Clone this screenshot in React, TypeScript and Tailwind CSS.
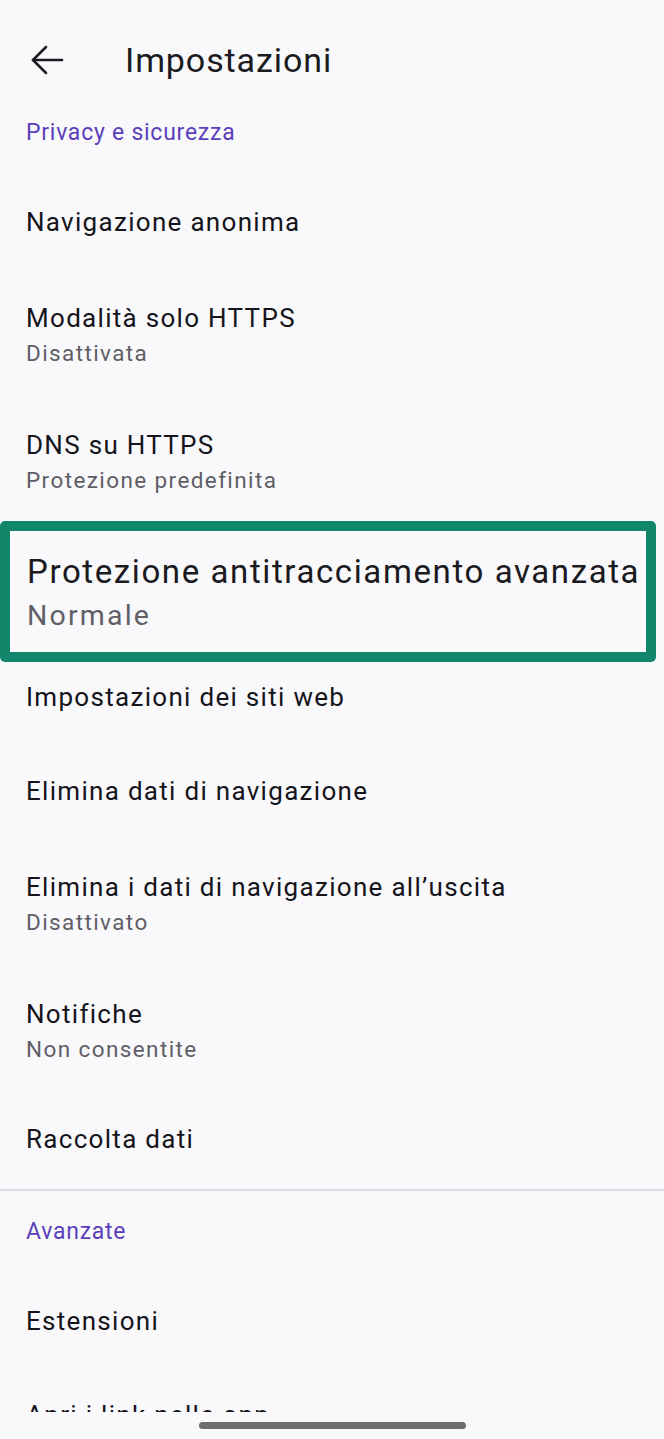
import React from 'react';

type Pref = {
  title: string;
  summary?: string;
  highlighted?: boolean;
};

const privacyPrefs: Pref[] = [
  { title: 'Navigazione anonima' },
  { title: 'Modalità solo HTTPS', summary: 'Disattivata' },
  { title: 'DNS su HTTPS', summary: 'Protezione predefinita' },
  { title: 'Protezione antitracciamento avanzata', summary: 'Normale', highlighted: true },
  { title: 'Impostazioni dei siti web' },
  { title: 'Elimina dati di navigazione' },
  { title: 'Elimina i dati di navigazione all’uscita', summary: 'Disattivato' },
  { title: 'Notifiche', summary: 'Non consentite' },
  { title: 'Raccolta dati' },
];

const advancedPrefs: Pref[] = [{ title: 'Estensioni' }, { title: 'Apri i link nelle app' }];

const BackArrow = () => (
  <svg width="34" height="30" viewBox="0 0 34 30" fill="none" stroke="#1c1b1f" strokeWidth="2.6" strokeLinecap="round" strokeLinejoin="round">
    <path d="M32 15H3" />
    <path d="M16 2L3 15l13 13" />
  </svg>
);

const CategoryHeader = ({ label }: { label: string }) => (
  <div className="pl-[26px] pt-[26px] pb-[27px] text-[23px] leading-[30px] tracking-[0.75px] text-[#5b3fba]">{label}</div>
);

const PrefRow = ({ pref }: { pref: Pref }) => {
  if (pref.highlighted) {
    // callout box drawn over the row, a bit larger than the row itself
    return (
      <div className="relative h-[127px]">
        <div className="absolute left-0 top-[-2px] w-[656px] h-[141px] rounded-[5px] border-[10px] border-[#12866a] bg-[#f9f9fc] flex flex-col justify-center pl-[17px] pt-[5px]">
          <div className="text-[33px] leading-[44px] tracking-[1.6px] text-[#1b1a20] whitespace-nowrap">{pref.title}</div>
          <div className="text-[28.5px] leading-[44px] tracking-[2.2px] text-[#605f66]">{pref.summary}</div>
        </div>
      </div>
    );
  }

  return (
    <div className={`flex flex-col justify-center pl-[26px] ${pref.summary ? 'h-[127px] pt-[4px]' : 'h-[94px]'}`}>
      <div className="text-[26px] leading-[36px] tracking-[1.3px] text-[#15141a]">{pref.title}</div>
      {pref.summary && <div className="text-[22.5px] leading-[34px] tracking-[1.4px] text-[#5f5e66]">{pref.summary}</div>}
    </div>
  );
};

export default function App() {
  return (
    <div className="w-[664px] h-[1439px] bg-[#f9f9fc] flex flex-col overflow-hidden" style={{ fontFamily: 'Roboto, "Noto Sans", sans-serif' }}>
      <div className="h-[1412px] overflow-hidden">
        {/* toolbar */}
        <div className="mt-[28px] h-[64px] flex items-center">
          <div className="pl-[30px] w-[125px] flex items-center">
            <BackArrow />
          </div>
          <div className="text-[34px] leading-[40px] tracking-[0.9px] text-[#1b1a20]">Impostazioni</div>
        </div>

        <CategoryHeader label="Privacy e sicurezza" />
        {privacyPrefs.map((p) => (
          <PrefRow key={p.title} pref={p} />
        ))}

        <div className="mt-[3px] h-[2px] bg-[#dedde3]" />

        <CategoryHeader label="Avanzate" />
        {advancedPrefs.map((p) => (
          <PrefRow key={p.title} pref={p} />
        ))}
      </div>

      {/* gesture nav bar */}
      <div className="h-[27px] flex justify-center pt-[10px]">
        <div className="w-[267px] h-[7px] rounded-full bg-[#6d6d70]" />
      </div>
    </div>
  );
}
